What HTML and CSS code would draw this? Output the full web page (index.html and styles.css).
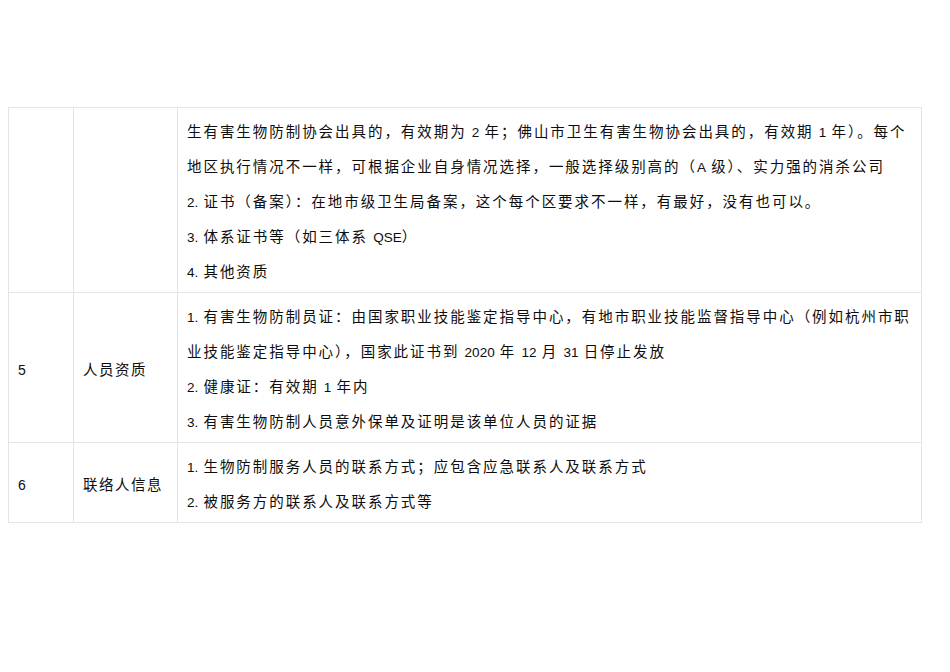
FILE: index.html
```html
<!DOCTYPE html>
<html lang="zh-CN">
<head>
<meta charset="utf-8">
<title>资质要求</title>
<link rel="stylesheet" href="styles.css">
</head>
<body>
<div class="page">
  <table class="req">
    <colgroup>
      <col class="c-no">
      <col class="c-name">
      <col class="c-desc">
    </colgroup>
    <tbody>
      <tr>
        <td class="no"></td>
        <td class="name"></td>
        <td class="desc">
          <p>生有害生物防制协会出具的，有效期为 <span class="num">2</span> 年；佛山市卫生有害生物协会出具的，有效期 <span class="num">1</span> 年）。每个<br>地区执行情况不一样，可根据企业自身情况选择，一般选择级别高的（<span class="num">A</span> 级）、实力强的消杀公司</p>
          <p><span class="num">2.</span> 证书（备案）：在地市级卫生局备案，这个每个区要求不一样，有最好，没有也可以。</p>
          <p><span class="num">3.</span> 体系证书等（如三体系 <span class="num">QSE</span>）</p>
          <p><span class="num">4.</span> 其他资质</p>
        </td>
      </tr>
      <tr>
        <td class="no"><span class="num big">5</span></td>
        <td class="name">人员资质</td>
        <td class="desc">
          <p><span class="num">1.</span> 有害生物防制员证：由国家职业技能鉴定指导中心，有地市职业技能监督指导中心（例如杭州市职<br>业技能鉴定指导中心），国家此证书到 <span class="num">2020</span> 年 <span class="num">12</span> 月 <span class="num">31</span> 日停止发放</p>
          <p><span class="num">2.</span> 健康证：有效期 <span class="num">1</span> 年内</p>
          <p><span class="num">3.</span> 有害生物防制人员意外保单及证明是该单位人员的证据</p>
        </td>
      </tr>
      <tr>
        <td class="no"><span class="num big">6</span></td>
        <td class="name">联络人信息</td>
        <td class="desc">
          <p><span class="num">1.</span> 生物防制服务人员的联系方式；应包含应急联系人及联系方式</p>
          <p><span class="num">2.</span> 被服务方的联系人及联系方式等</p>
        </td>
      </tr>
    </tbody>
  </table>
</div>
</body>
</html>
```
FILE: styles.css
```css
html, body {
  margin: 0;
  padding: 0;
  background: #ffffff;
}

.page {
  padding: 107px 0 0 8px;
}

.req {
  width: 914px;
  border-collapse: collapse;
  table-layout: fixed;
  font-family: "Noto Sans CJK SC", "Noto Sans", sans-serif;
  font-size: 14.5px;
  letter-spacing: 1.95px;
  color: #0d0d0d;
}

.c-no { width: 65px; }
.c-name { width: 104px; }

.req td {
  border: 1px solid #e4e4e4;
  padding: 5px 4px 4px 9px;
  line-height: 35px;
  vertical-align: middle;
}

.req td.desc {
  vertical-align: top;
}

.req td.no,
.req td.name {
  letter-spacing: 1.5px;
}

.desc p {
  margin: 0;
  white-space: nowrap;
}

.num {
  font-family: "Liberation Sans", Arial, sans-serif;
  font-size: 13.5px;
  letter-spacing: 0;
  line-height: 0;
}

.num.big {
  font-size: 14px;
}
```
